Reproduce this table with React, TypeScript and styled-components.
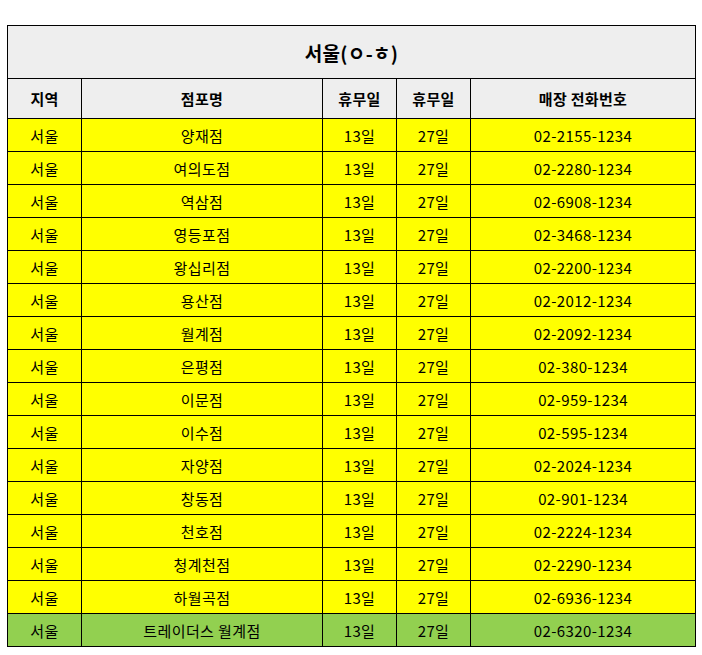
import React from "react"
import styled, { createGlobalStyle } from "styled-components"

const GlobalStyle = createGlobalStyle`
  body {
    margin: 0;
    background: #ffffff;
    font-family: "Noto Sans CJK KR", "Noto Sans", sans-serif;
  }
`

const Page = styled.div`
  padding: 25px 7px 0 7px;
`

const Table = styled.table`
  width: 688px;
  border-collapse: collapse;
  table-layout: fixed;
  color: #000;
  font-size: 15px;
`

const Col = styled.col<{ $w: number }>`
  width: ${p => p.$w}px;
`

const TitleCell = styled.th`
  height: 52px;
  padding: 0;
  background: #eeeeee;
  border: 1px solid #000;
  font-size: 19px;
  font-weight: 700;
  letter-spacing: 0.3px;
  text-align: center;
  vertical-align: middle;
`

const HeadCell = styled.th`
  height: 39px;
  padding: 0;
  background: #eeeeee;
  border: 1px solid #000;
  font-size: 15px;
  font-weight: 700;
  letter-spacing: 0.3px;
  text-align: center;
`

const Cell = styled.td<{ $green?: boolean }>`
  height: 32px;
  padding: 0;
  background: ${p => (p.$green ? "#92d050" : "#ffff00")};
  border: 1px solid #000;
  text-align: center;
  line-height: 1;
  font-weight: 400;
  letter-spacing: 0.4px;
`

interface Store {
  name: string
  phone: string
  green?: boolean
}

const stores: Store[] = [
  { name: "양재점", phone: "02-2155-1234" },
  { name: "여의도점", phone: "02-2280-1234" },
  { name: "역삼점", phone: "02-6908-1234" },
  { name: "영등포점", phone: "02-3468-1234" },
  { name: "왕십리점", phone: "02-2200-1234" },
  { name: "용산점", phone: "02-2012-1234" },
  { name: "월계점", phone: "02-2092-1234" },
  { name: "은평점", phone: "02-380-1234" },
  { name: "이문점", phone: "02-959-1234" },
  { name: "이수점", phone: "02-595-1234" },
  { name: "자양점", phone: "02-2024-1234" },
  { name: "창동점", phone: "02-901-1234" },
  { name: "천호점", phone: "02-2224-1234" },
  { name: "청계천점", phone: "02-2290-1234" },
  { name: "하월곡점", phone: "02-6936-1234" },
  { name: "트레이더스 월계점", phone: "02-6320-1234", green: true },
]

export default function App() {
  return (
    <Page>
      <GlobalStyle />
      <Table>
        <colgroup>
          <Col $w={74} />
          <Col $w={241} />
          <Col $w={74} />
          <Col $w={74} />
          <Col $w={225} />
        </colgroup>
        <thead>
          <tr>
            <TitleCell colSpan={5}>서울(ㅇ-ㅎ)</TitleCell>
          </tr>
          <tr>
            <HeadCell>지역</HeadCell>
            <HeadCell>점포명</HeadCell>
            <HeadCell>휴무일</HeadCell>
            <HeadCell>휴무일</HeadCell>
            <HeadCell>매장 전화번호</HeadCell>
          </tr>
        </thead>
        <tbody>
          {stores.map(s => (
            <tr key={s.name}>
              <Cell $green={s.green}>서울</Cell>
              <Cell $green={s.green}>{s.name}</Cell>
              <Cell $green={s.green}>13일</Cell>
              <Cell $green={s.green}>27일</Cell>
              <Cell $green={s.green}>{s.phone}</Cell>
            </tr>
          ))}
        </tbody>
      </Table>
    </Page>
  )
}
